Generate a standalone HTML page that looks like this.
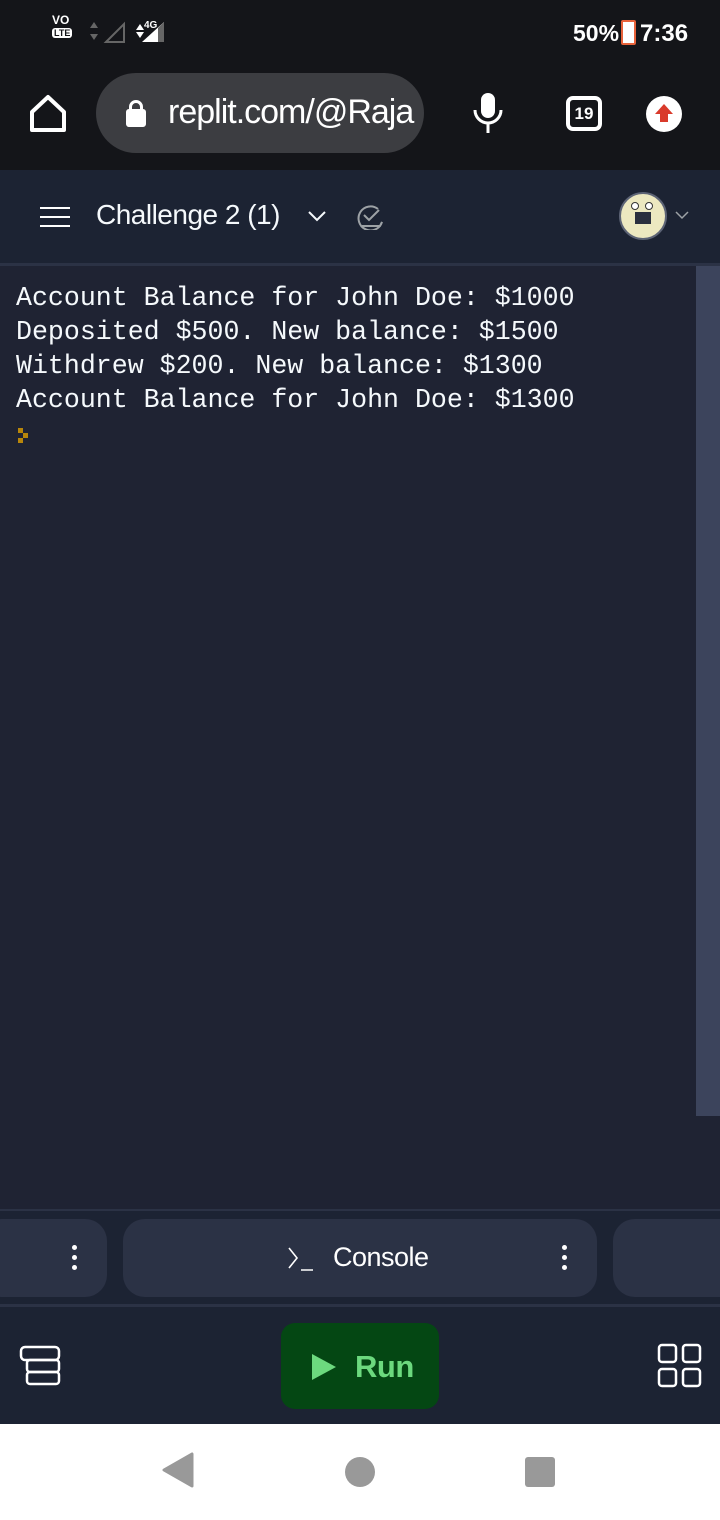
<!DOCTYPE html>
<html><head><meta charset="utf-8"><style>
*{margin:0;padding:0;box-sizing:border-box}
body{width:720px;height:1520px;background:#1c2333;font-family:"Liberation Sans",sans-serif;position:relative;overflow:hidden}
.abs{position:absolute}
</style></head><body>
<div class="abs" style="left:0;top:0;width:720px;height:170px;background:#141519"></div>
<!-- status -->
<div class="abs" style="left:52px;top:14px;color:#fff;font-size:12px;font-weight:bold;line-height:12px">VO<br><span style="background:#fff;color:#141519;border-radius:3px;padding:0 2px;font-size:9px">LTE</span></div>
<svg class="abs" style="left:86px;top:18px" width="90" height="26"><path d="M8 4l4 6h-8zM8 22l4-6h-8z" fill="#666"/><path d="M20 24L38 6V24Z" fill="none" stroke="#666" stroke-width="2"/><path d="M50 12l4-6 4 6zM50 14h8l-4 6z" fill="#fff"/><text x="58" y="10" fill="#fff" font-size="10" font-weight="bold" font-family="Liberation Sans">4G</text><path d="M56 24L78 4V24Z" fill="#fff"/><path d="M72 10v14h6V4z" fill="#666"/></svg>
<div class="abs" style="left:573px;top:20px;color:#fff;font-size:23px;font-weight:bold">50%</div>
<div class="abs" style="left:621px;top:20px;width:15px;height:25px;border:2px solid #e8623a;border-radius:2px;background:#fff"></div>
<div class="abs" style="left:640px;top:20px;color:#fff;font-size:24px;font-weight:bold">7:36</div>
<!-- url bar -->
<svg class="abs" style="left:28px;top:94px" width="40" height="40"><path d="M4 18L20 3 36 18V36H4Z" fill="none" stroke="#fff" stroke-width="4" stroke-linejoin="round"/></svg>
<div class="abs" style="left:96px;top:73px;width:328px;height:80px;border-radius:40px;background:#3c3d41;overflow:hidden">
<div class="abs" style="left:30px;top:36px;width:20px;height:18px;background:#fff;border-radius:3px"></div>
<div class="abs" style="left:33px;top:27px;width:14px;height:14px;border:3px solid #fff;border-radius:7px 7px 0 0"></div>
<div class="abs" style="left:72px;top:20px;color:#fff;font-size:34px;letter-spacing:-1px;white-space:nowrap">replit.com/@Raja</div></div>
<svg class="abs" style="left:470px;top:92px" width="36" height="42"><rect x="11" y="1" width="14" height="25" rx="7" fill="#fff"/><path d="M5 18a13 13 0 0 0 26 0M18 31v10" fill="none" stroke="#fff" stroke-width="3"/></svg>
<div class="abs" style="left:566px;top:96px;width:36px;height:35px;border:4px solid #fff;border-radius:7px;color:#fff;font-weight:bold;font-size:17px;text-align:center;line-height:27px">19</div>
<div class="abs" style="left:646px;top:96px;width:36px;height:36px;border-radius:50%;background:#fff"></div>
<svg class="abs" style="left:646px;top:96px" width="36" height="36"><path d="M18 8l9 10h-5v8h-8v-8h-5z" fill="#d93a2b"/></svg>
<!-- header -->
<div class="abs" style="left:0;top:170px;width:720px;height:94px;background:#1c2333"></div>
<div class="abs" style="left:40px;top:207px;width:30px;height:2px;background:#fff;box-shadow:0 9px 0 #fff,0 18px 0 #fff"></div>
<div class="abs" style="left:96px;top:199px;color:#f5f9fc;font-size:28px;letter-spacing:-0.5px">Challenge 2 (1)</div>
<svg class="abs" style="left:306px;top:206px" width="22" height="20"><path d="M3 6l8 8 8-8" fill="none" stroke="#f5f9fc" stroke-width="2"/></svg>
<svg class="abs" style="left:354px;top:202px" width="32" height="28"><path d="M24 7A12 12 0 1 0 28 20L26 24H8" fill="none" stroke="#9da2a6" stroke-width="2"/><path d="M10 13l5 5 10-10" fill="none" stroke="#9da2a6" stroke-width="2"/></svg>
<div class="abs" style="left:619px;top:192px;width:48px;height:48px;border-radius:50%;background:#ece8c0;border:2px solid #5c6375"></div>
<div class="abs" style="left:631px;top:202px;width:8px;height:8px;border-radius:50%;background:#fff;border:1.5px solid #333"></div>
<div class="abs" style="left:645px;top:202px;width:8px;height:8px;border-radius:50%;background:#fff;border:1.5px solid #333"></div>
<div class="abs" style="left:635px;top:212px;width:16px;height:12px;background:#2a2f3e"></div>
<svg class="abs" style="left:674px;top:208px" width="16" height="14"><path d="M2 4l6 6 6-6" fill="none" stroke="#9da2a6" stroke-width="1.5"/></svg>
<div class="abs" style="left:0;top:263px;width:720px;height:3px;background:#2b3245"></div>
<!-- console -->
<div class="abs" style="left:0;top:266px;width:720px;height:943px;background:#1f2333"></div>
<div class="abs" style="left:696px;top:266px;width:24px;height:850px;background:#3c445c"></div>
<pre class="abs" style="left:16px;top:281px;color:#f5f9fc;font-family:'Liberation Mono',monospace;font-size:26.6px;line-height:34px">Account Balance for John Doe: $1000
Deposited $500. New balance: $1500
Withdrew $200. New balance: $1300
Account Balance for John Doe: $1300</pre>
<div class="abs" style="left:18px;top:428px;width:5px;height:5px;background:#b8860b;box-shadow:5px 5px 0 #b8860b,0 10px 0 #b8860b"></div>
<div class="abs" style="left:0;top:1209px;width:720px;height:2px;background:#2b3245"></div>
<!-- tabs -->
<div class="abs" style="left:-20px;top:1219px;width:127px;height:78px;border-radius:22px;background:#2b3245"></div>
<div class="abs" style="left:72px;top:1245px;width:5px;height:5px;border-radius:50%;background:#fff;box-shadow:0 10px 0 #fff,0 20px 0 #fff"></div>
<div class="abs" style="left:123px;top:1219px;width:474px;height:78px;border-radius:22px;background:#2b3245"></div>
<svg class="abs" style="left:287px;top:1246px" width="28" height="26"><path d="M2 2l8 10-8 10M14 24h12" fill="none" stroke="#fff" stroke-width="1.6"/></svg>
<div class="abs" style="left:333px;top:1242px;color:#fff;font-size:27px;letter-spacing:-0.5px">Console</div>
<div class="abs" style="left:562px;top:1245px;width:5px;height:5px;border-radius:50%;background:#fff;box-shadow:0 10px 0 #fff,0 20px 0 #fff"></div>
<div class="abs" style="left:613px;top:1219px;width:140px;height:78px;border-radius:22px;background:#2b3245"></div>
<div class="abs" style="left:0;top:1304px;width:720px;height:3px;background:#2b3245"></div>
<!-- bottom -->
<svg class="abs" style="left:18px;top:1344px" width="44" height="44"><rect x="3" y="3" width="38" height="13" rx="4" fill="none" stroke="#fff" stroke-width="2.5"/><rect x="9" y="16" width="32" height="12" rx="3" fill="none" stroke="#fff" stroke-width="2.5"/><rect x="9" y="28" width="32" height="12" rx="3" fill="none" stroke="#fff" stroke-width="2.5"/></svg>
<div class="abs" style="left:281px;top:1323px;width:158px;height:86px;border-radius:14px;background:#044713"></div>
<svg class="abs" style="left:310px;top:1352px" width="28" height="30"><path d="M2 2L26 15 2 28Z" fill="#6cd97e"/></svg>
<div class="abs" style="left:355px;top:1349px;color:#6cd97e;font-size:31px;font-weight:bold;letter-spacing:-0.5px">Run</div>
<svg class="abs" style="left:656px;top:1342px" width="48" height="48"><g fill="none" stroke="#fff" stroke-width="2.5"><rect x="3" y="3" width="17" height="17" rx="3"/><rect x="27" y="3" width="17" height="17" rx="3"/><rect x="3" y="27" width="17" height="17" rx="3"/><rect x="27" y="27" width="17" height="17" rx="3"/></g></svg>
<!-- nav -->
<div class="abs" style="left:0;top:1424px;width:720px;height:96px;background:#fff"></div>
<svg class="abs" style="left:160px;top:1452px" width="36" height="36"><path d="M32 2V34L4 18Z" fill="#999" stroke="#999" stroke-linejoin="round" stroke-width="3"/></svg>
<div class="abs" style="left:345px;top:1457px;width:30px;height:30px;border-radius:50%;background:#999"></div>
<div class="abs" style="left:525px;top:1457px;width:30px;height:30px;border-radius:3px;background:#999"></div>
</body></html>
